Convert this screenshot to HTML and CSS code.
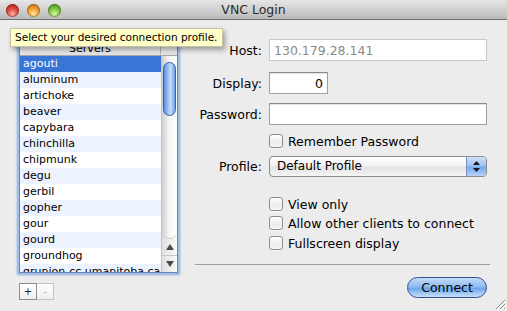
FILE: index.html
```html
<!DOCTYPE html>
<html lang="en">
<head>
  <meta charset="UTF-8" />
  <title>VNC Login</title>
  <link rel="stylesheet" href="styles.css">
</head>
<body>
  <div class="window">
    <div class="titlebar">
      <div class="lights">
        <span class="light red"></span>
        <span class="light orange"></span>
        <span class="light green"></span>
      </div>
      <div class="title">VNC Login</div>
    </div>

    <div class="content">
      <div class="servers">
        <div class="list">
          <div class="list-head">
            <div class="col-title">Servers</div>
            <div class="col-corner"></div>
          </div>
          <div class="list-body">
            <ul class="rows">
              <li class="selected">agouti</li>
              <li>aluminum</li>
              <li>artichoke</li>
              <li>beaver</li>
              <li>capybara</li>
              <li>chinchilla</li>
              <li>chipmunk</li>
              <li>degu</li>
              <li>gerbil</li>
              <li>gopher</li>
              <li>gour</li>
              <li>gourd</li>
              <li>groundhog</li>
              <li>grunion-cc.umanitoba.ca</li>
              <li>hamster</li>
            </ul>
            <div class="scrollbar">
              <div class="track"><div class="thumb"></div></div>
              <div class="arrow up">
                <svg width="8" height="6" viewBox="0 0 8 6"><path d="M4 0 L8 6 L0 6 Z" fill="#4a4a4a"/></svg>
              </div>
              <div class="arrow down">
                <svg width="8" height="6" viewBox="0 0 8 6"><path d="M0 0 L8 0 L4 6 Z" fill="#4a4a4a"/></svg>
              </div>
            </div>
          </div>
        </div>
        <div class="list-buttons">
          <button class="small">+</button>
          <button class="small" disabled>-</button>
        </div>
      </div>

      <form class="login">
        <div class="row row-host">
          <label class="label">Host:</label>
          <input class="field wide" type="text" value="130.179.28.141" disabled>
        </div>
        <div class="row row-display">
          <label class="label">Display:</label>
          <input class="field short" type="text" value="0">
        </div>
        <div class="row row-password">
          <label class="label">Password:</label>
          <input class="field wide" type="password">
        </div>
        <div class="row row-remember">
          <span class="label"></span>
          <label class="check"><input type="checkbox"> Remember Password</label>
        </div>
        <div class="row row-profile">
          <label class="label">Profile:</label>
          <div class="popup">
            <span class="popup-text">Default Profile</span>
            <span class="popup-arrows">
              <svg width="7" height="11" viewBox="0 0 7 11">
                <path d="M3.5 0 L7 4 L0 4 Z" fill="#1a1a1a"/>
                <path d="M0 7 L7 7 L3.5 11 Z" fill="#1a1a1a"/>
              </svg>
            </span>
          </div>
        </div>
        <div class="row row-view">
          <span class="label"></span>
          <label class="check"><input type="checkbox"> View only</label>
        </div>
        <div class="row row-shared">
          <span class="label"></span>
          <label class="check"><input type="checkbox"> Allow other clients to connect</label>
        </div>
        <div class="row row-full">
          <span class="label"></span>
          <label class="check"><input type="checkbox"> Fullscreen display</label>
        </div>
        <div class="separator"></div>
        <div class="actions">
          <button type="button" class="connect">Connect</button>
        </div>
      </form>
    </div>

    <div class="tooltip">Select your desired connection profile.</div>

    <svg class="grip" width="11" height="11" viewBox="0 0 11 11">
      <path d="M10 1 L1 10 M10 5 L5 10 M10 9 L9 10" stroke="#8a8a8a" stroke-width="1"/>
      <path d="M11 2 L2 11 M11 6 L6 11" stroke="#ffffff" stroke-width="1"/>
    </svg>
  </div>
</body>
</html>
```

FILE: styles.css
```css
* {
  box-sizing: border-box;
}
body {
  margin: 0;
  font-family: 'DejaVu Sans', 'Liberation Sans', sans-serif;
  background: #ececec;
  color: #000;
}
.window {
  position: relative;
  width: 507px;
  height: 311px;
  overflow: hidden;
  background: #ececec;
}

/* title bar */
.titlebar {
  display: flex;
  align-items: center;
  height: 20px;
  background: linear-gradient(#e6e6e6, #bababa);
  border-bottom: 1px solid #6f6f6f;
}
.lights {
  display: flex;
  width: 66px;
  gap: 8px;
  padding-left: 6px;
  margin-top: 1px;
}
.light {
  width: 13px;
  height: 13px;
  border-radius: 50%;
  box-shadow: inset 0 0 0 1px rgba(0, 0, 0, 0.3);
}
.red {
  background: radial-gradient(circle at 50% 75%, #ffb0a8 0, #e0463c 45%, #a8140e 100%);
}
.orange {
  background: radial-gradient(circle at 50% 75%, #ffe6a0 0, #f0a030 45%, #b86a08 100%);
}
.green {
  background: radial-gradient(circle at 50% 75%, #d6f6a8 0, #7cc43c 45%, #3f8a12 100%);
}
.title {
  flex: 1;
  padding-right: 66px;
  text-align: center;
  font-size: 12.5px;
  color: #2a2a2a;
}

/* content */
.content {
  display: flex;
  gap: 17px;
  padding-left: 19px;
}
.servers {
  padding-top: 21px;
}
.list {
  width: 159px;
  height: 232px;
  border: 1px solid #6d88b8;
  box-shadow: 0 0 0 1px #9cbde9, 0 0 2px 2px #86ace0;
  background: #fff;
}
.list-head {
  display: flex;
  height: 14px;
  border-bottom: 1px solid #a8a8a8;
  background: linear-gradient(#ffffff, #e4e4e4);
  font-size: 11px;
  line-height: 13px;
}
.col-title {
  width: 141px;
  text-align: center;
  border-right: 1px solid #b9b9b9;
}
.col-corner {
  flex: 1;
}
.list-body {
  display: flex;
  height: 216px;
  overflow: hidden;
}
.rows {
  list-style: none;
  margin: 0;
  padding: 0;
  width: 141px;
  font-size: 11px;
}
.rows li {
  height: 16px;
  line-height: 16px;
  padding-left: 3px;
  white-space: nowrap;
  overflow: hidden;
}
.rows li:nth-child(even) {
  background: #edf3fe;
}
.rows li.selected {
  background: #3875d7;
  color: #fff;
}
.scrollbar {
  display: flex;
  flex-direction: column;
  width: 16px;
  border-left: 1px solid #c4c4c4;
  background: linear-gradient(90deg, #d8d8d8, #f6f6f6 40%, #ffffff);
}
.track {
  flex: 1;
  padding: 6px 1px 0 1px;
  border-bottom: 1px solid #c9c9c9;
  border-radius: 0 0 7px 7px;
  background: linear-gradient(90deg, #cfcfcf, #f4f4f4 45%, #ffffff);
}
.thumb {
  height: 54px;
  border-radius: 7px;
  border: 1px solid #3a5ea8;
  background: linear-gradient(90deg, #5d8fe0, #a9cbf6 45%, #c6ddfb 60%, #6c9fe8);
}
.arrow {
  display: flex;
  align-items: center;
  justify-content: center;
  height: 17px;
  background: linear-gradient(90deg, #e0e0e0, #fafafa);
}
.arrow.up {
  border-bottom: 1px solid #c6c6c6;
}
.arrow.down {
  height: 16px;
}
.list-buttons {
  display: flex;
  margin-top: 10px;
}
.small {
  display: flex;
  align-items: center;
  justify-content: center;
  width: 18px;
  height: 17px;
  padding: 0;
  border: 1px solid #8d8d8d;
  background: linear-gradient(#ffffff, #efefef);
  font-family: 'DejaVu Sans', sans-serif;
  font-size: 10px;
  line-height: 1;
  color: #222;
}
.small:disabled {
  width: 17px;
  border-color: #c4c4c4;
  border-left: none;
  color: #b0b0b0;
}

/* form */
.login {
  width: 295px;
  padding-top: 19px;
  font-size: 12.5px;
}
.row {
  display: flex;
  align-items: center;
  gap: 7px;
}
.label {
  width: 67px;
  flex: none;
  text-align: right;
}
.field {
  height: 22px;
  padding: 0 4px;
  border: 1px solid #a0a0a0;
  border-top-color: #8a8a8a;
  box-shadow: inset 0 1px 1px rgba(0, 0, 0, 0.12);
  background: #fff;
  font-family: 'DejaVu Sans', sans-serif;
  font-size: 12.5px;
  color: #000;
  outline: none;
}
.field:disabled {
  border-color: #c8c8c8;
  box-shadow: none;
  color: #8a8a8a;
}
.wide {
  width: 218px;
}
.short {
  width: 59px;
  text-align: right;
}
.row-host {
  height: 22px;
}
.row-display {
  height: 22px;
  margin-top: 11px;
}
.row-password {
  height: 22px;
  margin-top: 9px;
}
.row-remember {
  height: 14px;
  margin-top: 9px;
}
.row-profile {
  height: 21px;
  margin-top: 8px;
}
.row-view {
  height: 14px;
  margin-top: 20px;
}
.row-shared {
  height: 14px;
  margin-top: 5px;
}
.row-full {
  height: 14px;
  margin-top: 6px;
}
.check {
  display: flex;
  align-items: center;
  gap: 5px;
  white-space: nowrap;
}
.check input {
  appearance: none;
  width: 14px;
  height: 14px;
  margin: 0;
  border: 1px solid #8c8c8c;
  border-radius: 3px;
  background: linear-gradient(#ffffff, #ececec 60%, #f6f6f6);
  box-shadow: 0 1px 0 rgba(255, 255, 255, 0.6);
}
.popup {
  display: flex;
  width: 218px;
  height: 21px;
  border: 1px solid #8c8c8c;
  border-radius: 4px;
  overflow: hidden;
  background: linear-gradient(#ffffff, #f2f2f2 45%, #e2e2e2 55%, #f6f6f6);
}
.popup-text {
  flex: 1;
  padding-left: 7px;
  line-height: 19px;
  font-size: 12px;
}
.popup-arrows {
  display: flex;
  align-items: center;
  justify-content: center;
  width: 20px;
  border-left: 1px solid #7690c0;
  background: linear-gradient(#cfe0f8, #9fc2f0 45%, #78a8ec 55%, #b6d4fa);
}
.separator {
  margin-top: 14px;
  border-top: 1px solid #9f9f9f;
}
.actions {
  display: flex;
  justify-content: flex-end;
  padding-right: 3px;
  margin-top: 12px;
}
.connect {
  width: 80px;
  height: 21px;
  padding: 0;
  border: 1px solid #34508c;
  border-radius: 11px;
  background: linear-gradient(#c4dbf7, #8fbbf1 45%, #6fa6ec 55%, #c9e2fd);
  font-family: 'DejaVu Sans', sans-serif;
  font-size: 12.5px;
  color: #000;
}

/* overlays */
.tooltip {
  position: absolute;
  left: 10px;
  top: 28px;
  width: 213px;
  height: 19px;
  padding-left: 4px;
  border: 1px solid #c2c2a8;
  background: #ffffc7;
  box-shadow: 2px 3px 5px rgba(0, 0, 0, 0.35);
  font-size: 10.5px;
  line-height: 17px;
  white-space: nowrap;
}
.grip {
  position: absolute;
  right: 1px;
  bottom: 1px;
}
```
